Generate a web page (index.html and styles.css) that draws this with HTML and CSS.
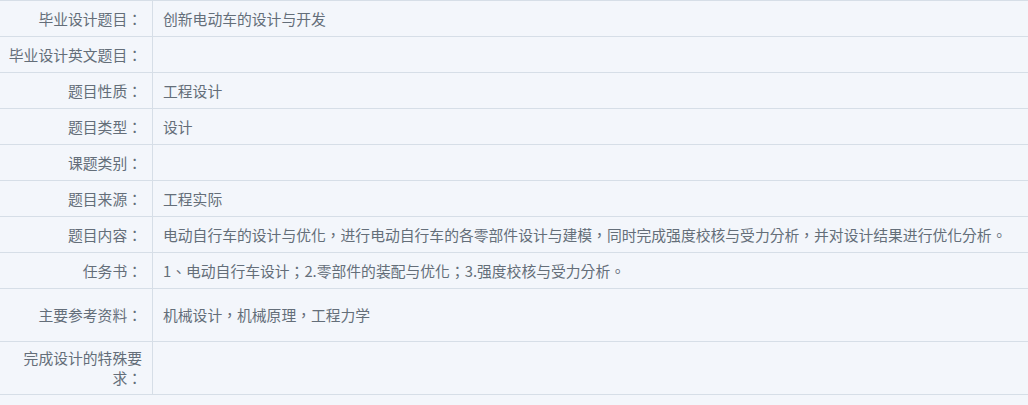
FILE: index.html
```html
<!DOCTYPE html>
<html lang="zh-TW">
<head>
  <meta charset="UTF-8" />
  <meta name="viewport" content="width=device-width, initial-scale=1.0"/>
  <title>毕业设计题目信息</title>
  <link rel="stylesheet" href="styles.css">
</head>
<body>

  <!-- 题目信息 -->
  <table class="info-table">
    <tr>
      <td class="label">毕业设计题目：</td>
      <td class="value">创新电动车的设计与开发</td>
    </tr>
    <tr>
      <td class="label">毕业设计英文题目：</td>
      <td class="value"></td>
    </tr>
    <tr>
      <td class="label">题目性质：</td>
      <td class="value">工程设计</td>
    </tr>
    <tr>
      <td class="label">题目类型：</td>
      <td class="value">设计</td>
    </tr>
    <tr>
      <td class="label">课题类别：</td>
      <td class="value"></td>
    </tr>
    <tr>
      <td class="label">题目来源：</td>
      <td class="value">工程实际</td>
    </tr>
    <tr>
      <td class="label">题目内容：</td>
      <td class="value">电动自行车的设计与优化，进行电动自行车的各零部件设计与建模，同时完成强度校核与受力分析，并对设计结果进行优化分析。</td>
    </tr>
    <tr>
      <td class="label">任务书：</td>
      <td class="value">1、电动自行车设计；2.零部件的装配与优化；3.强度校核与受力分析。</td>
    </tr>
    <tr class="tall">
      <td class="label">主要参考资料：</td>
      <td class="value">机械设计，机械原理，工程力学</td>
    </tr>
    <tr class="tall">
      <td class="label">完成设计的特殊要求：</td>
      <td class="value"></td>
    </tr>
  </table>

</body>
</html>
```

FILE: styles.css
```css
body {
  margin: 0;
  background-color: #f3f6fb;
  font-family: "Noto Sans CJK TC", "Noto Sans CJK SC", sans-serif;
  font-size: 14.8px;
  color: #646e79;
}

.info-table {
  width: 100%;
  border-collapse: collapse;
  border-top: 1px solid #d6dee7;
}

.info-table td {
  height: 35px;
  padding: 0 10px;
  border-bottom: 1px solid #d6dee7;
  line-height: 20px;
  vertical-align: middle;
}

.info-table .label {
  width: 137px;
  padding: 0 10px 0 5px;
  text-align: right;
  border-right: 1px solid #d6dee7;
}

.info-table .tall td {
  height: 52px;
}
```
